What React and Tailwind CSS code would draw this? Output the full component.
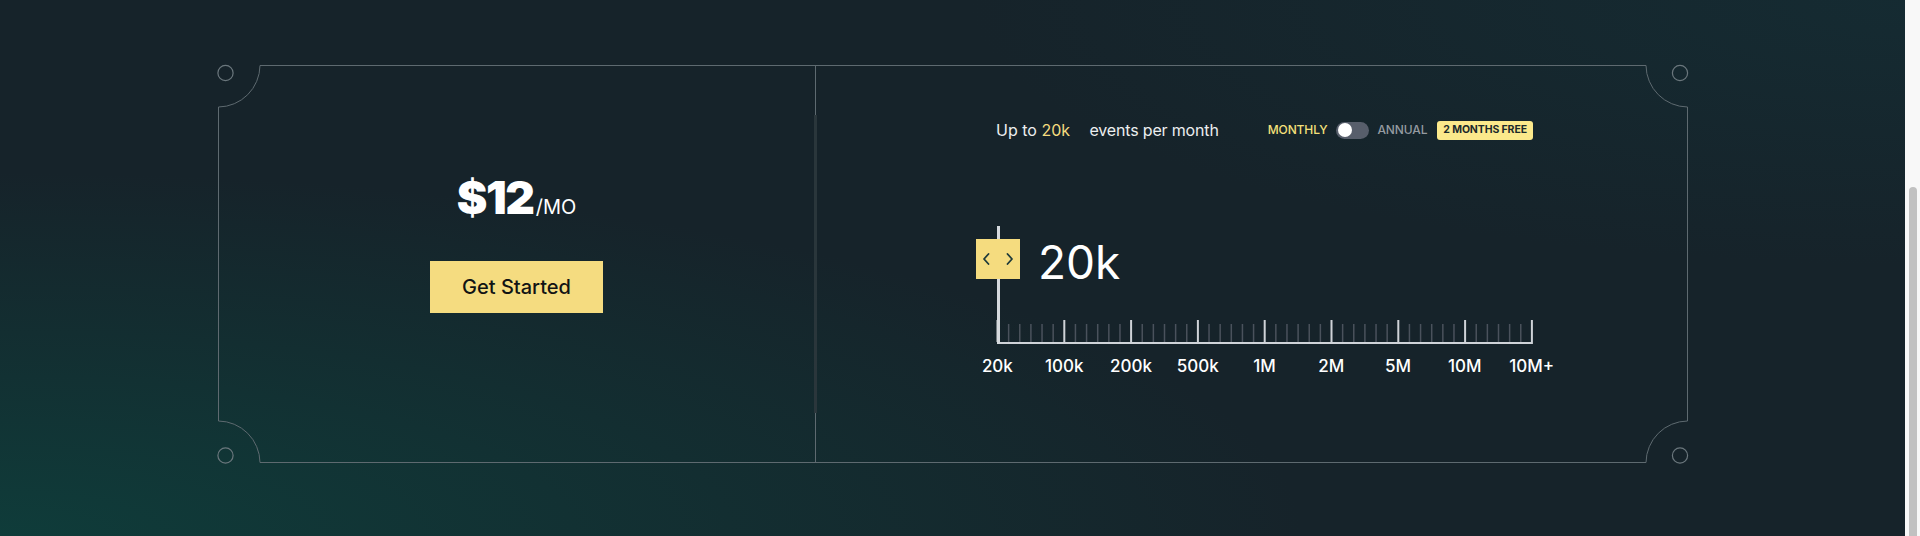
import { useState } from 'react'

const marks = ['20k', '100k', '200k', '500k', '1M', '2M', '5M', '10M', '10M+']

function FrameOutline() {
  // notched ticket outline + the little rings in each corner
  const d =
    'M42,0.5 H1428 A42,42 0 0 0 1469.5,42 V356 A42,42 0 0 0 1428,397.5 H42 A42,42 0 0 0 0.5,356 V42 A42,42 0 0 0 42,0.5 Z'
  return (
    <svg
      className="absolute inset-0 pointer-events-none overflow-visible"
      width="1470"
      height="398"
      viewBox="0 0 1470 398"
      fill="none"
    >
      <path d={d} stroke="#5e6a70" strokeWidth="1" />
      <circle cx="7.5" cy="8" r="7.6" stroke="#6b777d" strokeWidth="1.2" />
      <circle cx="1462" cy="8" r="7.6" stroke="#6b777d" strokeWidth="1.2" />
      <circle cx="7.5" cy="390.5" r="7.6" stroke="#6b777d" strokeWidth="1.2" />
      <circle cx="1462" cy="390.5" r="7.6" stroke="#6b777d" strokeWidth="1.2" />
    </svg>
  )
}

function Ruler() {
  const step = 66.8
  const ticks = []
  for (let i = 0; i <= 8; i++) {
    const x = 1.5 + i * step
    ticks.push(<rect key={'M' + i} x={x - 1} y={0} width={2} height={22} fill="#cfd3d8" />)
    if (i < 8) {
      for (let j = 1; j <= 5; j++) {
        ticks.push(
          <rect key={`m${i}-${j}`} x={x + (j * step) / 6 - 0.75} y={4} width={1.5} height={18} fill="#4a525c" />
        )
      }
    }
  }
  return (
    <svg width="540" height="24" className="block">
      {ticks}
      <rect x="1" y="22" width={step * 8 + 1.5} height="2" fill="#cfd3d8" />
    </svg>
  )
}

function Handle() {
  return (
    <div className="relative w-[44px] h-[40px] bg-[#f5dc7f] shrink-0">
      <svg width="44" height="40" viewBox="0 0 44 40" fill="none" className="block">
        <polyline points="12.5,15 8,20 12.5,25" stroke="#1d3a3a" strokeWidth="1.8" strokeLinecap="round" strokeLinejoin="round" />
        <polyline points="31.5,15 36,20 31.5,25" stroke="#1d3a3a" strokeWidth="1.8" strokeLinecap="round" strokeLinejoin="round" />
      </svg>
    </div>
  )
}

function Toggle({ on, onChange }) {
  return (
    <button
      onClick={() => onChange(!on)}
      className={`flex items-center w-[33px] h-[17px] rounded-full bg-[#575e6b] px-[2px] ${on ? 'justify-end' : 'justify-start'}`}
    >
      <span className="block size-[14px] rounded-full bg-white" />
    </button>
  )
}

export default function App() {
  const [annual, setAnnual] = useState(false)

  return (
    <div
      className="flex w-full h-[536px] overflow-hidden bg-[#16232a] bg-[radial-gradient(ellipse_at_0%_100%,#0f3c3a_0%,rgba(22,35,42,0)_48%),radial-gradient(ellipse_at_100%_0%,#152b32_0%,rgba(22,35,42,0)_35%)]"
      style={{ fontFamily: 'Inter, "Noto Sans", sans-serif' }}
    >
      <div className="flex-1 pt-[65px]">
        <div className="relative ml-[218px] flex w-[1470px] h-[398px]">
          <FrameOutline />
          <div className="absolute left-[596px] top-[50px] w-[3px] h-[298px] bg-[#2a363b]" />

          {/* left: price */}
          <div className="w-[598px] shrink-0 border-r border-[#5e6a70] flex flex-col items-center pt-[109px]">
            <div className="flex items-baseline text-white">
              <span className="text-[46px] leading-none font-black tracking-[-0.03em]">$12</span>
              <span className="text-[20px] leading-none font-normal ml-[2px]">/MO</span>
            </div>
            <button className="mt-[41px] w-[173px] h-[52px] bg-[#f5dc80] text-[#111314] text-xl font-medium">
              Get Started
            </button>
          </div>

          {/* right: events slider */}
          <div className="flex-1 pt-[53px] pl-[180px]">
            <div className="flex items-center h-6 text-base text-[#eceeef]">
              <span>Up to&nbsp;</span>
              <span className="inline-block w-[48px] text-[#f5dc7f]">20k</span>
              <span className="tracking-[-0.01em]">events per month</span>
              <span className="ml-[49px] text-xs font-medium tracking-[-0.01em] text-[#f4e07a]">MONTHLY</span>
              <span className="ml-[9px]">
                <Toggle on={annual} onChange={setAnnual} />
              </span>
              <span className="ml-2 text-xs font-medium tracking-[-0.01em] text-[#959ba1]">ANNUAL</span>
              <span className="ml-[10px] flex items-center h-[19px] px-1.5 rounded-[3px] bg-[#fbe98b] text-[10.5px] leading-none font-bold tracking-[-0.01em] text-[#1b2a2b]">
                2 MONTHS FREE
              </span>
            </div>

            <div className="relative mt-[84px] w-[540px]">
              <div className="absolute left-[1px] top-0 w-[3px] h-[118px] bg-[#d5d9dd]" />
              <div className="flex items-start pt-[13px] -ml-[20px]">
                <Handle />
                <span className="ml-[18px] text-[46px] leading-none font-normal text-white">20k</span>
              </div>
              <div className="mt-[35px]">
                <Ruler />
              </div>
              <div className="grid grid-cols-9 w-[601px] -ml-[32px] mt-3">
                {marks.map((m) => (
                  <span key={m} className="text-center text-[17px] leading-5 font-medium text-white">
                    {m}
                  </span>
                ))}
              </div>
            </div>
          </div>
        </div>
      </div>

      {/* browser scrollbar */}
      <div className="w-[15px] shrink-0 bg-[#f8f8f8] flex flex-col pt-[187px] items-center">
        <div className="w-[8px] flex-1 rounded-t-full bg-[#c1c1c1]" />
      </div>
    </div>
  )
}
